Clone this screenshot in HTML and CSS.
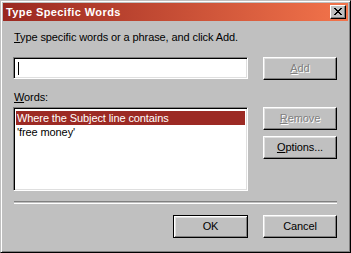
FILE: index.html
```html
<!DOCTYPE html>
<html>
<head>
<meta charset="utf-8">
<link rel="stylesheet" href="styles.css">
</head>
<body>
<div class="window">
  <div class="titlebar">
    <span class="title">Type Specific Words</span>
    <span class="close"><svg width="8" height="7" viewBox="0 0 8 7"><path d="M0 0h2v1h1v1h2v-1h1v-1h2v1h-1v1h-1v1h-1v1h1v1h1v1h1v1h-2v-1h-1v-1h-2v1h-1v1h-2v-1h1v-1h1v-1h1v-1h-1v-1h-1v-1h-1z" fill="#000"/></svg></span>
  </div>
  <div class="client">
    <div class="label"><u>T</u>ype specific words or a phrase, and click Add.</div>
    <div class="row row-input">
      <div class="field"><span class="caret"></span></div>
      <div class="btn disabled"><span><u>A</u>dd</span></div>
    </div>
    <div class="label label-words"><u>W</u>ords:</div>
    <div class="row row-list">
      <div class="field list">
        <div class="item selected">Where the Subject line contains</div>
        <div class="item">'free money'</div>
      </div>
      <div class="side">
        <div class="btn disabled"><span><u>R</u>emove</span></div>
        <div class="btn"><span><u>O</u>ptions...</span></div>
      </div>
    </div>
    <div class="separator"></div>
    <div class="footer">
      <div class="btn default"><span>OK</span></div>
      <div class="btn"><span>Cancel</span></div>
    </div>
  </div>
</div>
</body>
</html>
```

FILE: styles.css
```css
html, body {
  margin: 0;
  padding: 0;
  background: #c0c0c0;
}
.window {
  width: 351px;
  height: 253px;
  box-sizing: border-box;
  background: #c0c0c0;
  border-top: 1px solid #c0c0c0;
  border-left: 1px solid #c0c0c0;
  border-right: 1px solid #000;
  border-bottom: 1px solid #000;
  box-shadow: inset 1px 1px #fff, inset -1px -1px #808080;
  padding: 2px;
  display: flex;
  flex-direction: column;
  font-family: "Liberation Sans", Arial, sans-serif;
  font-size: 11px;
  letter-spacing: -0.1px;
  color: #000;
}
.titlebar {
  height: 18px;
  flex: none;
  background: linear-gradient(to right, #9a2820, #f3744b);
  display: flex;
  align-items: center;
  justify-content: space-between;
  padding: 0 2px 0 3px;
}
.title {
  color: #fff;
  font-weight: bold;
  font-size: 11px;
  letter-spacing: 0.4px;
  line-height: 13px;
  margin-top: 1px;
}
.close {
  width: 16px;
  height: 14px;
  box-sizing: border-box;
  background: #c0c0c0;
  border-top: 1px solid #fff;
  border-left: 1px solid #fff;
  border-right: 1px solid #000;
  border-bottom: 1px solid #000;
  box-shadow: inset -1px -1px #808080;
  display: flex;
  align-items: center;
  justify-content: center;
  padding: 0 1px 1px 0;
}
.close svg { display: block; }
.client {
  flex: 1;
  padding: 10px 11px 0 10px;
  display: flex;
  flex-direction: column;
}
.label {
  line-height: 13px;
  padding-left: 1px;
  white-space: nowrap;
}
.label-words { margin-top: 11px; }
.row {
  display: flex;
  justify-content: space-between;
}
.row-input { margin-top: 13px; }
.row-list { margin-top: 3px; }
.field {
  width: 235px;
  box-sizing: border-box;
  background: #fff;
  border-top: 1px solid #808080;
  border-left: 1px solid #808080;
  border-right: 1px solid #fff;
  border-bottom: 1px solid #fff;
  box-shadow: inset 1px 1px #000, inset -1px -1px #dfdfdf;
}
.row-input .field {
  height: 22px;
  padding: 4px 0 0 4px;
}
.caret {
  display: block;
  width: 1px;
  height: 13px;
  background: #000;
}
.list {
  height: 84px;
  padding: 2px;
}
.item {
  line-height: 14px;
  padding-left: 1px;
  white-space: nowrap;
}
.item.selected {
  background: #9c2a24;
  color: #fff;
  margin-top: 1px;
}
.side {
  display: flex;
  flex-direction: column;
  gap: 6px;
}
.btn {
  width: 74px;
  height: 23px;
  box-sizing: border-box;
  background: #c0c0c0;
  border-top: 1px solid #fff;
  border-left: 1px solid #fff;
  border-right: 1px solid #000;
  border-bottom: 1px solid #000;
  box-shadow: inset -1px -1px #808080, inset 1px 1px #dfdfdf;
  display: flex;
  align-items: center;
  justify-content: center;
  line-height: 13px;
}
.btn.disabled {
  color: #808080;
  text-shadow: 1px 1px #fff;
}
.btn.default {
  width: 75px;
  border: 1px solid #000;
  box-shadow: inset 1px 1px #fff, inset -1px -1px #808080, inset 2px 2px #dfdfdf, inset -2px -2px #c0c0c0;
}
.separator {
  margin: 10px 0 0 1px;
  height: 1px;
  border-top: 1px solid #808080;
  border-bottom: 1px solid #fff;
}
.footer {
  margin-top: 11px;
  display: flex;
  justify-content: flex-end;
  gap: 15px;
}
```
